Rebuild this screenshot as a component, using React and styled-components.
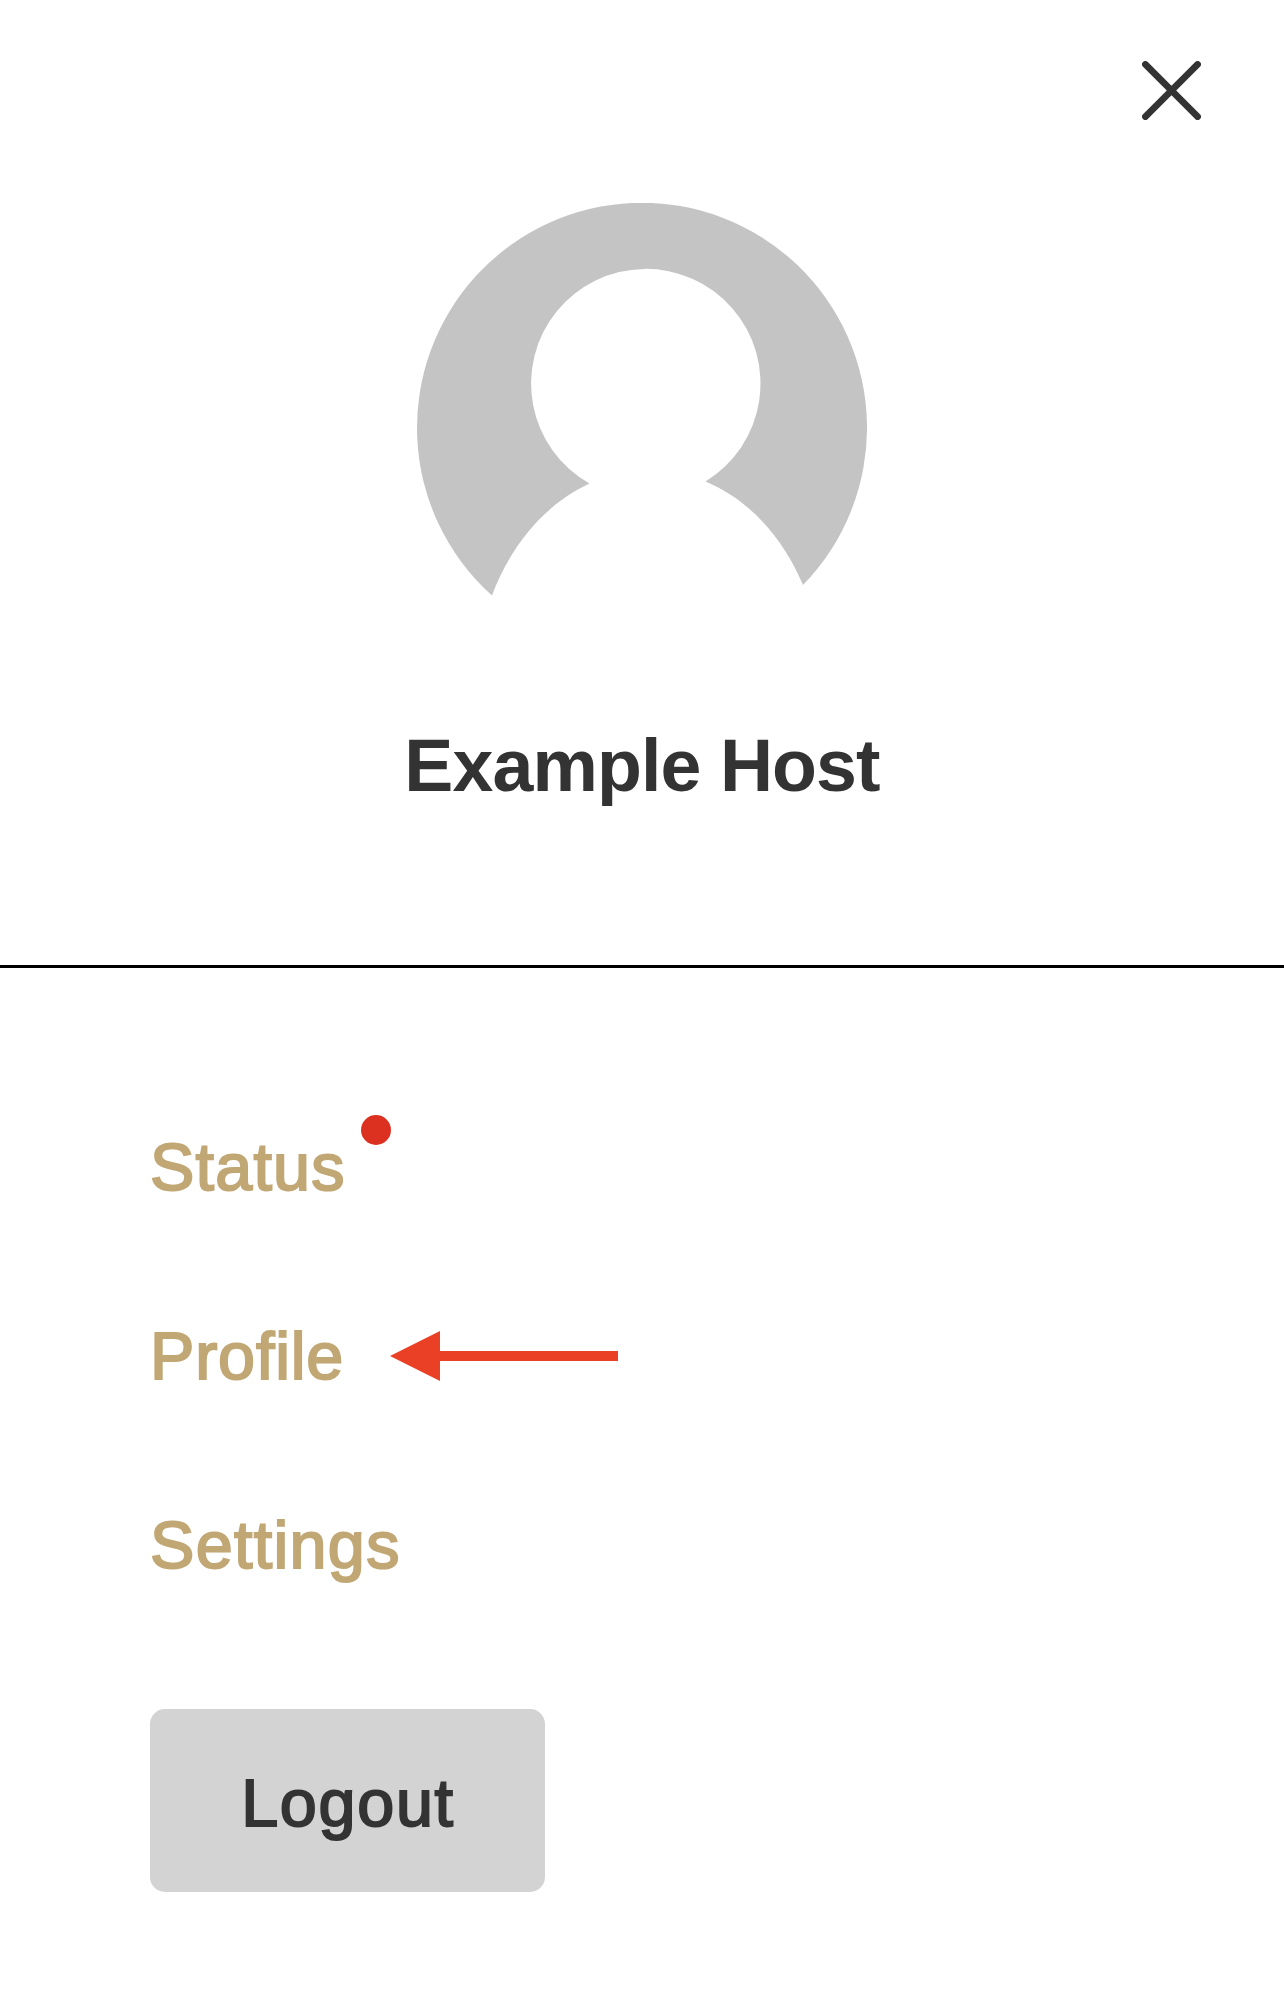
import React from 'react'
import styled, {createGlobalStyle} from 'styled-components'

const GlobalStyle = createGlobalStyle`
  body {
    margin: 0;
    background: #fff;
    font-family: 'Liberation Sans', Arial, sans-serif;
  }
`

const Drawer = styled.div`
  display: flex;
  flex-direction: column;
  width: 1284px;
  height: 1999px;
  overflow: hidden;
  box-sizing: border-box;
  color: #333;
`

const Header = styled.header`
  display: flex;
  flex-direction: column;
  align-items: center;
  height: 968px;
  box-sizing: border-box;
  padding-top: 61px;
  border-bottom: 3px solid #000;
`

const CloseButton = styled.button`
  display: flex;
  align-self: flex-end;
  margin: 0 83px 83px 0;
  padding: 0;
  border: 0;
  background: none;
  cursor: pointer;
`

const Name = styled.h1`
  margin: 68px 0 0;
  font-size: 73.5px;
  font-weight: 700;
  line-height: 90px;
  letter-spacing: -0.9px;
  white-space: nowrap;
`

const Menu = styled.nav`
  display: flex;
  flex-direction: column;
  align-items: flex-start;
  padding: 104px 150px 0;
`

const MenuItem = styled.div`
  display: flex;
  align-items: center;
  height: 189px;
`

const Label = styled.span`
  position: relative;
  color: ${props => props.color};
  font-size: 66.5px;
  line-height: 80px;
  letter-spacing: ${props => props.$spacing}px;
  -webkit-text-stroke: 2px ${props => props.color};
`

const Badge = styled.i`
  position: absolute;
  top: -12px;
  left: 211px;
  width: 30px;
  height: 30px;
  border-radius: 50%;
  background: #dc3020;
`

// the label box is a fixed width so the arrow tip stays put
const PointedLabel = styled(Label)`
  width: 196px;
`

const Pointer = styled.svg`
  margin-left: 44px;
`

const LogoutButton = styled.button`
  display: flex;
  align-items: center;
  justify-content: center;
  width: 395px;
  height: 183px;
  margin-top: 70px;
  padding: 4px 0 0 1px;
  border: 0;
  border-radius: 15px;
  background: #d3d3d3;
  font-family: inherit;
  cursor: pointer;
`

const GOLD = '#c1a774'

const CloseIcon = () => (
  <svg width="59" height="59" viewBox="0 0 59 59">
    <path
      d="M3.4 3.4L55.6 55.6M55.6 3.4L3.4 55.6"
      stroke="#333"
      strokeWidth="6.7"
      strokeLinecap="round"
    />
  </svg>
)

const Avatar = () => (
  <svg width="450" height="450" viewBox="0 0 450 450">
    <path
      fill="#c4c4c4"
      d="M75 392.5A225 225 0 1 1 386 382C366 335 333 297 288.5 278.5A114.7 114.7 0 1 0 172.5 280.5C128 301 94 342 75 392.5Z"
    />
  </svg>
)

const App = () => (
  <Drawer>
    <GlobalStyle />
    <Header>
      <CloseButton aria-label="Close">
        <CloseIcon />
      </CloseButton>
      <Avatar />
      <Name>Example Host</Name>
    </Header>
    <Menu>
      <MenuItem>
        <Label color={GOLD} $spacing={1.2}>
          Status
          <Badge />
        </Label>
      </MenuItem>
      <MenuItem>
        <PointedLabel color={GOLD} $spacing={0.8}>
          Profile
        </PointedLabel>
        <Pointer width="228" height="50" viewBox="0 0 228 50">
          <path d="M0 25L50 0V20H228V30H50V50Z" fill="#ea4025" />
        </Pointer>
      </MenuItem>
      <MenuItem>
        <Label color={GOLD} $spacing={1.3}>
          Settings
        </Label>
      </MenuItem>
      <LogoutButton>
        <Label color="#333" $spacing={1.7}>
          Logout
        </Label>
      </LogoutButton>
    </Menu>
  </Drawer>
)

export default App
